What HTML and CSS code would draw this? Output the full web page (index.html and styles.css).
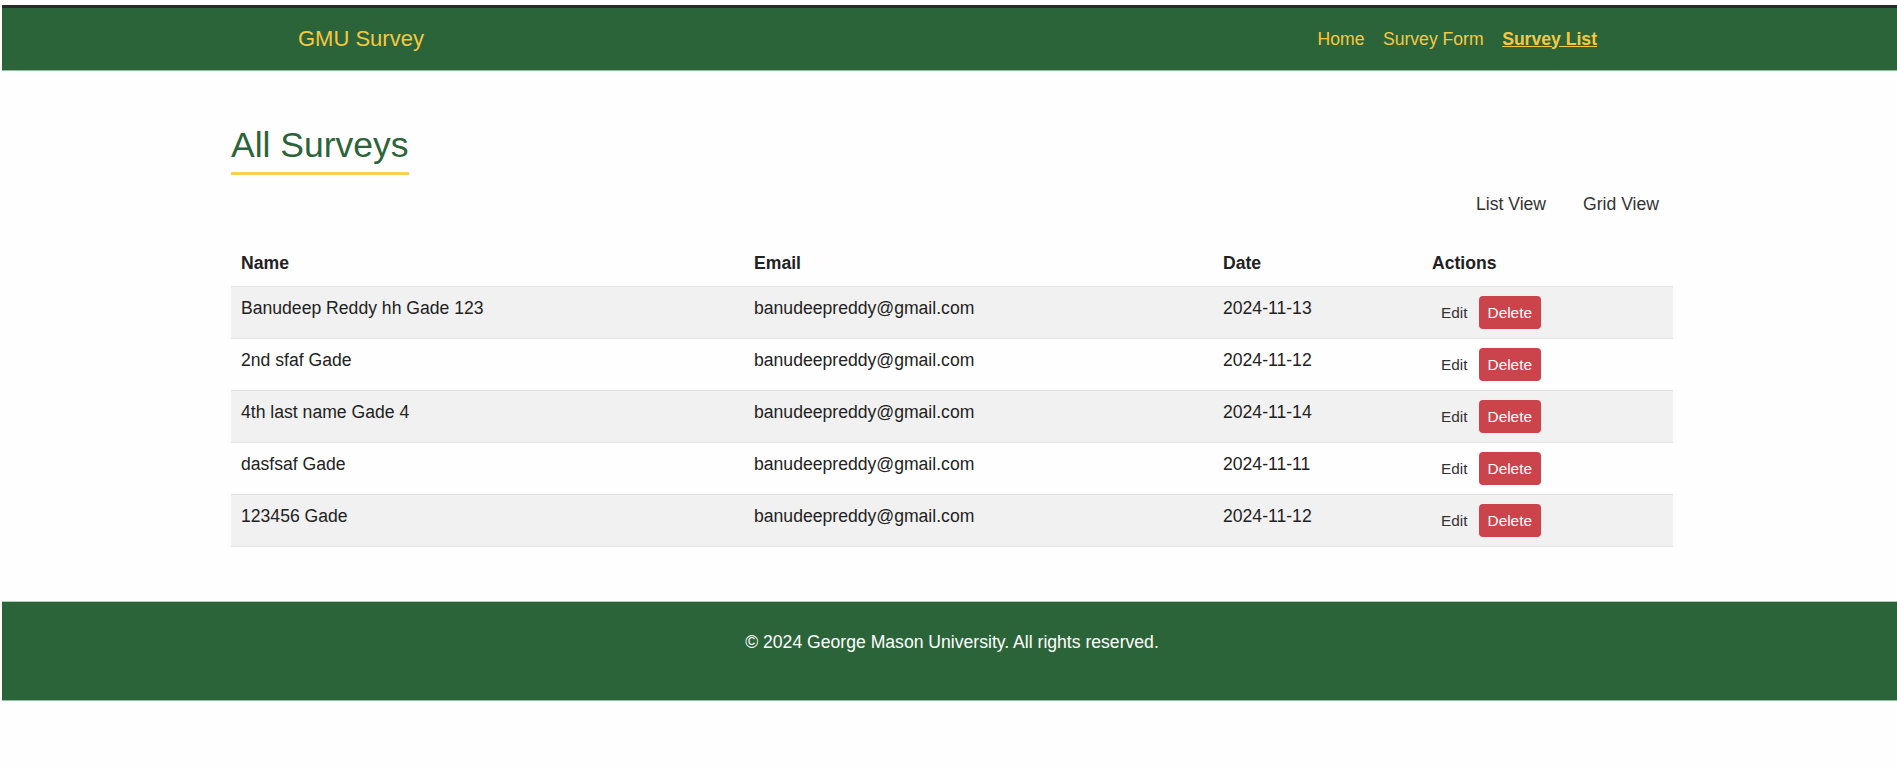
FILE: index.html
```html
<!DOCTYPE html>
<html lang="en">
<head>
<meta charset="utf-8">
<title>GMU Survey - Survey List</title>
<link rel="stylesheet" href="styles.css">
</head>
<body>
<header class="site-header">
  <div class="header-inner">
    <a class="brand" href="#">GMU Survey</a>
    <nav class="nav">
      <a class="nav-link" href="#">Home</a>
      <a class="nav-link" href="#">Survey Form</a>
      <a class="nav-link active" href="#">Survey List</a>
    </nav>
  </div>
</header>

<main class="main">
  <div class="container">
    <h1 class="page-title">All Surveys</h1>
    <div class="view-toggle">
      <button class="view-btn">List View</button>
      <button class="view-btn">Grid View</button>
    </div>
    <table class="survey-table">
      <colgroup>
        <col class="col-name">
        <col class="col-email">
        <col class="col-date">
        <col class="col-actions">
      </colgroup>
      <thead>
        <tr><th>Name</th><th>Email</th><th>Date</th><th>Actions</th></tr>
      </thead>
      <tbody>
        <tr>
          <td>Banudeep Reddy hh Gade 123</td>
          <td>banudeepreddy@gmail.com</td>
          <td>2024-11-13</td>
          <td class="actions"><div class="btns"><button class="btn btn-edit">Edit</button><button class="btn btn-delete">Delete</button></div></td>
        </tr>
        <tr>
          <td>2nd sfaf Gade</td>
          <td>banudeepreddy@gmail.com</td>
          <td>2024-11-12</td>
          <td class="actions"><div class="btns"><button class="btn btn-edit">Edit</button><button class="btn btn-delete">Delete</button></div></td>
        </tr>
        <tr>
          <td>4th last name Gade 4</td>
          <td>banudeepreddy@gmail.com</td>
          <td>2024-11-14</td>
          <td class="actions"><div class="btns"><button class="btn btn-edit">Edit</button><button class="btn btn-delete">Delete</button></div></td>
        </tr>
        <tr>
          <td>dasfsaf Gade</td>
          <td>banudeepreddy@gmail.com</td>
          <td>2024-11-11</td>
          <td class="actions"><div class="btns"><button class="btn btn-edit">Edit</button><button class="btn btn-delete">Delete</button></div></td>
        </tr>
        <tr>
          <td>123456 Gade</td>
          <td>banudeepreddy@gmail.com</td>
          <td>2024-11-12</td>
          <td class="actions"><div class="btns"><button class="btn btn-edit">Edit</button><button class="btn btn-delete">Delete</button></div></td>
        </tr>
      </tbody>
    </table>
  </div>
</main>

<footer class="site-footer">
  <p class="footer-text">&copy; 2024 George Mason University. All rights reserved.</p>
</footer>
</body>
</html>
```

FILE: styles.css
```css
* { box-sizing: border-box; }

html { overflow-x: hidden; }

body {
  margin: 0;
  padding: 5px 0 0 2px;
  background: #fefefe;
  font-family: "Liberation Sans", Arial, sans-serif;
  color: #222;
  font-size: 17.6px;
}

.site-header {
  background: #2c6439;
  border-top: 3px solid #2a2a2a;
  border-bottom: 1px solid #8fc3a0;
  padding-right: 4px;
}

.header-inner {
  max-width: 1299px;
  margin: 0 auto;
  height: 62px;
  display: flex;
  align-items: center;
  justify-content: space-between;
}

.brand {
  color: #f5c843;
  font-size: 22px;
  text-decoration: none;
}

.nav {
  display: flex;
  align-items: center;
  gap: 18.5px;
}

.nav-link {
  color: #f5c843;
  font-size: 17.6px;
  text-decoration: none;
}

.nav-link.active {
  font-weight: bold;
  text-decoration: underline;
}

.main {
  padding: 54px 0 54px 5px;
}

.container {
  width: 1442px;
  margin: 0 auto;
}

.page-title {
  display: inline-block;
  margin: 0;
  font-size: 35.5px;
  font-weight: normal;
  color: #2c6439;
  padding-bottom: 6px;
  border-bottom: 3px solid #f9d152;
}

.view-toggle {
  display: flex;
  justify-content: flex-end;
  gap: 9px;
  margin-top: 11px;
}

.view-btn {
  background: transparent;
  border: none;
  font-family: inherit;
  font-size: 17.6px;
  color: #333;
  padding: 8px 14px;
  line-height: 20px;
}

.survey-table {
  width: 100%;
  margin-top: 21px;
  border-collapse: collapse;
  table-layout: fixed;
}

.col-name { width: 513px; }
.col-email { width: 469px; }
.col-date { width: 209px; }
.col-actions { width: 251px; }

.survey-table th {
  text-align: left;
  font-weight: bold;
  color: #222;
  padding: 10px 10px 13px;
  line-height: 20px;
  border-bottom: 1px solid #e4e4e4;
}

.survey-table td {
  vertical-align: top;
  padding: 11px 10px 10px;
  line-height: 20px;
  color: #222;
  border-bottom: 1px solid #e2e2e2;
}

.survey-table tbody tr:nth-child(odd) td {
  background: #f1f1f1;
}

.survey-table td.actions {
  padding: 9px 10px;
}

.btns {
  display: flex;
  align-items: center;
  gap: 2px;
}

.btn {
  font-family: inherit;
  font-size: 15.4px;
  line-height: 23px;
  padding: 4px 8px;
  border: 1px solid transparent;
  border-radius: 4px;
  cursor: pointer;
}

.btn-edit {
  background: transparent;
  color: #333;
}

.btn-delete {
  background: #cb434b;
  color: #fff;
}

.site-footer {
  background: #2c6439;
  border-top: 1px solid #a9cfb3;
  border-bottom: 1px solid #8fc3a0;
  padding: 30px 0 48px 5px;
  text-align: center;
}

.footer-text {
  margin: 0;
  color: #fff;
  font-size: 17.6px;
  line-height: 20px;
}
```
